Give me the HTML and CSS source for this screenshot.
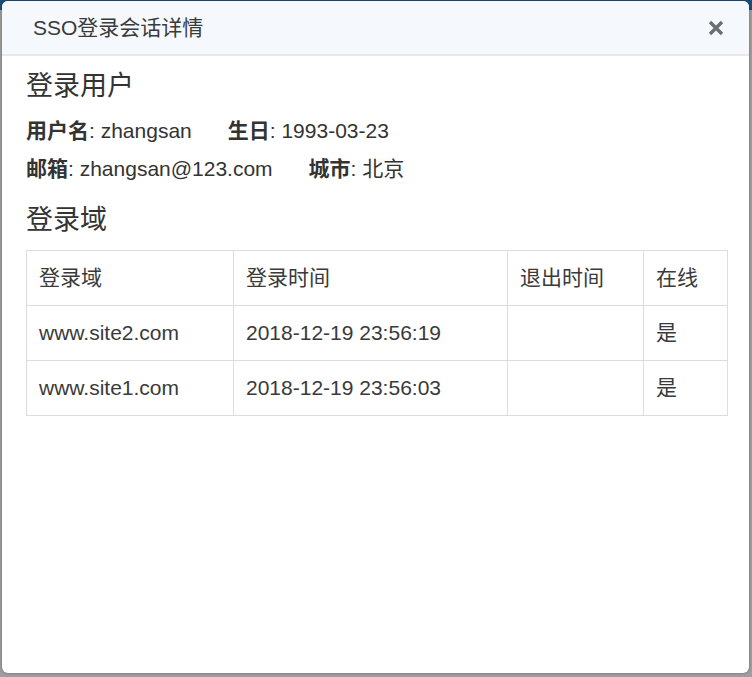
FILE: index.html
```html
<!DOCTYPE html>
<html lang="zh-CN">
<head>
<meta charset="utf-8">
<title>SSO登录会话详情</title>
<link rel="stylesheet" href="styles.css">
</head>
<body>
<div class="modal">
  <div class="modal-header">
    <h3 class="modal-title">SSO登录会话详情</h3>
    <button class="close" type="button" aria-label="关闭">
      <svg width="16" height="16" viewBox="0 0 16 16"><path d="M2 2 L14 14 M14 2 L2 14" stroke="#6e6e6e" stroke-width="3.4" stroke-linecap="butt"/></svg>
    </button>
  </div>
  <div class="modal-body">
    <h4 class="section-title">登录用户</h4>
    <p class="info"><span class="item"><b>用户名</b>: zhangsan</span><span class="item"><b>生日</b>: 1993-03-23</span></p>
    <p class="info"><span class="item"><b>邮箱</b>: zhangsan@123.com</span><span class="item"><b>城市</b>: 北京</span></p>
    <h4 class="section-title second">登录域</h4>
    <table class="grid">
      <colgroup><col class="c1"><col class="c2"><col class="c3"><col class="c4"></colgroup>
      <thead>
        <tr><th>登录域</th><th>登录时间</th><th>退出时间</th><th>在线</th></tr>
      </thead>
      <tbody>
        <tr><td>www.site2.com</td><td>2018-12-19 23:56:19</td><td></td><td>是</td></tr>
        <tr><td>www.site1.com</td><td>2018-12-19 23:56:03</td><td></td><td>是</td></tr>
      </tbody>
    </table>
  </div>
</div>
</body>
</html>
```
FILE: styles.css
```css
html, body {
  margin: 0;
  padding: 0;
  height: 100%;
}
body {
  background: linear-gradient(#1d4c79 0 10px, #9e9e9e 10px);
  font-family: "Liberation Sans", "Noto Sans CJK SC", sans-serif;
  color: #333;
  overflow: hidden;
}
.modal {
  margin: 1px 0 0 2px;
  width: 747px;
  height: 672px;
  background: #fff;
  border-radius: 6px;
  box-shadow: 0 0 3px rgba(0, 0, 0, 0.35);
  overflow: hidden;
  box-sizing: border-box;
}
.modal-header {
  height: 55px;
  box-sizing: border-box;
  background: #f5f9fe;
  border-bottom: 2px solid #e8e9ea;
  display: flex;
  align-items: center;
  justify-content: space-between;
  padding: 0 25px 0 31px;
}
.modal-title {
  margin: 0;
  font-size: 21px;
  font-weight: normal;
  line-height: 30px;
  color: #3a3a3a;
}
.close {
  border: 0;
  background: none;
  padding: 0;
  margin: 0;
  width: 16px;
  height: 16px;
  display: flex;
  cursor: pointer;
}
.modal-body {
  padding: 15px 22px 0 24px;
}
.section-title {
  margin: 0 0 15px;
  font-size: 27px;
  font-weight: normal;
  line-height: 30px;
  color: #333;
}
.section-title.second {
  margin-top: 21px;
}
.info {
  margin: 0 0 8px;
  font-size: 21px;
  line-height: 30px;
}
.info .item + .item {
  margin-left: 36px;
}
.info b {
  font-weight: bold;
}
.grid {
  border-collapse: collapse;
  width: 701px;
  table-layout: fixed;
  font-size: 21px;
}
.grid .c1 { width: 207px; }
.grid .c2 { width: 274px; }
.grid .c3 { width: 136px; }
.grid .c4 { width: 84px; }
.grid th,
.grid td {
  border: 1px solid #ddd;
  height: 55px;
  box-sizing: border-box;
  padding: 0 12px;
  text-align: left;
  font-weight: normal;
  line-height: 30px;
  vertical-align: middle;
  white-space: nowrap;
  color: #3a3a3a;
}
```
